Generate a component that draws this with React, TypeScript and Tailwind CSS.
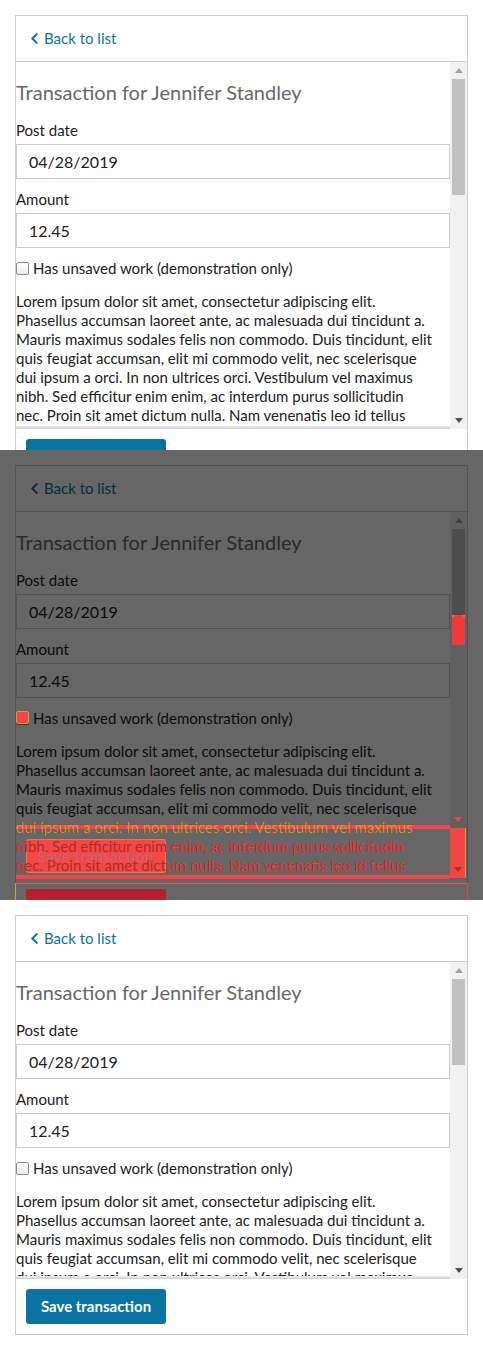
import React from 'react';

type Tone = 'normal' | 'red' | 'darkred' | 'orange';

const LINES = [
  'Lorem ipsum dolor sit amet, consectetur adipiscing elit.',
  'Phasellus accumsan laoreet ante, ac malesuada dui tincidunt a.',
  'Mauris maximus sodales felis non commodo. Duis tincidunt, elit',
  'quis feugiat accumsan, elit mi commodo velit, nec scelerisque',
  'dui ipsum a orci. In non ultrices orci. Vestibulum vel maximus',
  'nibh. Sed efficitur enim enim, ac interdum purus sollicitudin',
  'nec. Proin sit amet dictum nulla. Nam venenatis leo id tellus',
  'pulvinar, vitae fermentum nisl dictum. Donec eget nunc magna.',
];

const TONE_TEXT: Record<Tone, string> = {
  normal: 'text-[#212121]',
  red: 'text-[#ff3c3c]',
  darkred: 'text-[#b32a2a]',
  orange: 'text-[#d9973f]',
};

function Chevron() {
  return (
    <svg width="9" height="13" viewBox="0 0 320 512" className="shrink-0" fill="currentColor">
      <path d="M34.52 239.03L228.87 44.69c9.37-9.37 24.57-9.37 33.94 0l22.67 22.67c9.36 9.36 9.37 24.52.04 33.9L131.49 256l154.02 154.75c9.34 9.38 9.320 24.54-.04 33.9l-22.67 22.67c-9.37 9.37-24.57 9.370-33.94 0L34.52 272.97c-9.37-9.37-9.37-24.57 0-33.94z" />
    </svg>
  );
}

function Arrow({ up, color }: { up?: boolean; color: string }) {
  return (
    <svg width="8" height="5" viewBox="0 0 8 5" className={color} fill="currentColor">
      {up ? <path d="M0 5 L4 0 L8 5 Z" /> : <path d="M0 0 L8 0 L4 5 Z" />}
    </svg>
  );
}

function Panel({ short, tone = 'normal' }: { short?: boolean; tone?: Tone }) {
  const plain = tone === 'normal';
  const body = TONE_TEXT[tone];
  const border = plain ? 'border-[#cccccc]' : 'border-transparent';
  return (
    <div className="h-[450px] overflow-hidden pt-[15px] pl-[15px] font-['Lato','Liberation_Sans',sans-serif]">
      <div className={`w-[453px] border ${border} ${plain ? 'bg-white' : ''}`}>
        <div className={`h-[46px] flex items-center gap-[5px] pl-[14px] pb-[1px] border-b ${border} ${plain ? 'text-[#0974a1]' : body}`}>
          <Chevron />
          <span className="text-[15px] leading-[20px]">Back to list</span>
        </div>
        <div className={`flex ${short ? 'h-[317px]' : 'h-[367px]'}`}>
          <div className="relative w-[434px] overflow-hidden">
            <h2 className={`mt-[16px] text-[20px] leading-[28px] font-normal ${plain ? 'text-[#686868]' : body}`}>
              Transaction for Jennifer Standley
            </h2>
            <div className={`mt-[14px] text-[15px] leading-[20px] ${body}`}>Post date</div>
            <div className={`mt-[4px] h-[35px] border ${border} flex items-center pl-[12px] text-[16px] ${body}`}>
              04/28/2019
            </div>
            <div className={`mt-[10px] text-[15px] leading-[20px] ${body}`}>Amount</div>
            <div className={`mt-[4px] h-[35px] border ${border} flex items-center pl-[12px] text-[16px] ${body}`}>
              12.45
            </div>
            <div className={`mt-[10px] h-[20px] flex items-center gap-[4px] text-[15px] ${body}`}>
              <span
                className={`w-[13px] h-[13px] rounded-[2px] border ${plain ? 'border-[#8a8a8a] bg-linear-to-b from-white to-[#ececec]' : 'border-transparent'}`}
              />
              <span>Has unsaved work (demonstration only)</span>
            </div>
            <div className={`mt-[14px] text-[15px] leading-[19px] ${body}`}>
              {LINES.map((l) => (
                <div key={l} className="whitespace-nowrap">
                  {l}
                </div>
              ))}
            </div>
            {plain && (
              <div className="absolute left-0 right-0 bottom-0 h-[3px] bg-linear-to-b from-[#eeeeee] to-[#cfcfcf]" />
            )}
          </div>
          <div className={`relative w-[17px] flex flex-col items-center ${plain ? 'bg-[#f1f1f1]' : ''}`}>
            {plain && (
              <>
                <div className="h-[17px] flex items-center justify-center">
                  <Arrow up color="text-[#a3a3a3]" />
                </div>
                <div className={`w-[13px] bg-[#c1c1c1] ${short ? 'h-[86px]' : 'h-[116px]'}`} />
                <div className="flex-1" />
                <div className="h-[17px] flex items-center justify-center">
                  <Arrow color="text-[#505050]" />
                </div>
              </>
            )}
          </div>
        </div>
        <div className="p-[10px]">
          <div
            className={`h-[35px] w-[140px] rounded-[3px] flex items-center justify-center text-[15px] font-bold ${plain ? 'bg-[#0974a1] text-white' : 'text-transparent'}`}
          >
            Save transaction
          </div>
        </div>
      </div>
    </div>
  );
}

function Clip({ box, shift, tone }: { box: string; shift: string; tone: Tone }) {
  return (
    <div className={`absolute overflow-hidden ${box}`}>
      <div className={`absolute w-[483px] ${shift}`}>
        <Panel tone={tone} />
      </div>
    </div>
  );
}

function DiffPanel() {
  return (
    <div className="relative h-[450px] overflow-hidden">
      <Panel />
      <div className="absolute inset-0 bg-black/60" />
      {/* scroll thumb difference */}
      <div className="absolute left-[452px] top-[165px] w-[13px] h-[30px] bg-[#ef3b3b]" />
      <div className="absolute left-[452px] top-[165px] w-[2px] h-[2px] bg-[#b9893e]" />
      <div className="absolute left-[463px] top-[165px] w-[2px] h-[2px] bg-[#b9893e]" />
      {/* checkbox difference */}
      <div className="absolute left-[16px] top-[261px] w-[13px] h-[13px] rounded-[2px] bg-[#f24545] border border-[#d7973e]" />
      {/* test down arrow (red) */}
      <div className="absolute left-[454px] top-[367px] flex">
        <Arrow color="text-[#f04848]" />
      </div>
      {/* top band */}
      <div className="absolute left-[16px] top-[375px] w-[434px] h-[4px] bg-[#f24545]" />
      <Clip box="left-[16px] top-[368px] w-[434px] h-[19px]" shift="-left-[16px] -top-[368px]" tone="orange" />
      {/* red text lines */}
      <Clip box="left-[16px] top-[387px] w-[434px] h-[38px]" shift="-left-[16px] -top-[387px]" tone="red" />
      {/* test button area */}
      <div className="absolute left-[26px] top-[389px] w-[140px] h-[34px] rounded-[3px] bg-[#f44848] border border-[#d9973f]/70" />
      <Clip box="left-[26px] top-[389px] w-[140px] h-[34px]" shift="-left-[26px] -top-[389px]" tone="darkred" />
      <div className="absolute left-[26px] top-[389px] w-[140px] h-[34px] flex items-center justify-center text-[15px] font-normal tracking-[0.5px] text-[#8a8aa2]/45 font-['Lato','Liberation_Sans',sans-serif]">
        Save transaction
      </div>
      {/* scrollbar region */}
      <div className="absolute left-[450px] top-[378px] w-[16px] h-[50px] bg-[#f24545] border-r border-[#d9973f] flex items-end justify-center pb-[6px]">
        <Arrow color="text-[#b52a2a]" />
      </div>
      {/* bottom band */}
      <div className="absolute left-[16px] top-[425px] w-[434px] h-[4px] bg-[#f24545]" />
      {/* test card bottom border */}
      <div className="absolute left-[15px] top-[433px] w-[453px] h-[1px] bg-[#f04a4a]" />
      <div className="absolute left-[15px] top-[433px] w-[1px] h-[17px] bg-[#d9973f]" />
      <div className="absolute left-[467px] top-[433px] w-[1px] h-[17px] bg-[#e04848]" />
      {/* reference button */}
      <div className="absolute left-[26px] top-[439px] w-[140px] h-[20px] rounded-[3px] bg-[#b5202e]" />
    </div>
  );
}

export default function App() {
  return (
    <div className="w-[483px] bg-white">
      <Panel />
      <DiffPanel />
      <Panel short />
    </div>
  );
}
